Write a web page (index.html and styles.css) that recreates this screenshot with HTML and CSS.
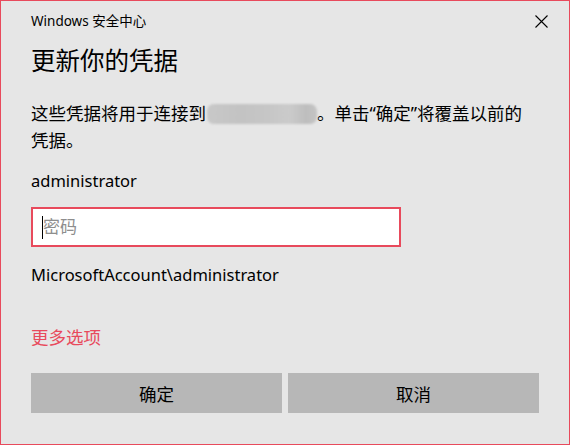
FILE: index.html
```html
<!DOCTYPE html>
<html lang="zh-CN">
<head>
<meta charset="utf-8">
<title>Windows 安全中心</title>
<link rel="stylesheet" href="styles.css">
</head>
<body>
<div class="dialog">
  <div class="titlebar">
    <span class="title">Windows 安全中心</span>
    <span class="close" aria-label="关闭">
      <svg width="13" height="13" viewBox="0 0 13 13"><path d="M0.5 0.5 L12.5 12.5 M12.5 0.5 L0.5 12.5" stroke="#000" stroke-width="1.1" fill="none"/></svg>
    </span>
  </div>
  <div class="content">
    <h1 class="heading">更新你的凭据</h1>
    <p class="desc">这些凭据将用于连接到<span class="redact"></span>。单击“确定”将覆盖以前的<br>凭据。</p>
    <div class="user">administrator</div>
    <div class="field"><span class="caret"></span><span class="placeholder">密码</span></div>
    <div class="domain">MicrosoftAccount\administrator</div>
    <a class="more">更多选项</a>
    <div class="buttons">
      <button class="btn">确定</button>
      <button class="btn">取消</button>
    </div>
  </div>
</div>
</body>
</html>
```
FILE: styles.css
```css
html, body {
  margin: 0;
  padding: 0;
  background: #e6e6e6;
}
.dialog {
  box-sizing: border-box;
  width: 570px;
  height: 445px;
  border: 1px solid #e84a5c;
  background: #e6e6e6;
  font-family: "Noto Sans", "Noto Sans CJK SC", sans-serif;
  color: #000;
}
.titlebar {
  display: flex;
  justify-content: space-between;
  align-items: flex-start;
  padding: 10px 21px 0 30px;
  height: 20px;
}
.title {
  font-size: 13.5px;
  line-height: 20px;
}
.close {
  display: block;
  margin-top: 4px;
  width: 13px;
  height: 13px;
}
.close svg { display: block; }
.content {
  padding: 0 30px;
  display: flex;
  flex-direction: column;
  align-items: flex-start;
}
.heading {
  margin: 14px 0 0 0;
  font-size: 24.5px;
  font-weight: normal;
  line-height: 32px;
}
.desc {
  margin: 23px 0 0 0;
  font-size: 17.5px;
  line-height: 27px;
}
.redact {
  display: inline-block;
  width: 110px;
  height: 20px;
  vertical-align: -4px;
  margin-left: 1px;
  border-radius: 7px;
  background: linear-gradient(90deg, #c8c8c8 0%, #c3c3c3 30%, #c6c6c6 55%, #cbcbcb 75%, #bebebe 90%, #c4c4c4 100%);
  filter: blur(0.8px);
}
.user {
  margin-top: 15px;
  font-size: 16.5px;
  line-height: 24px;
}
.field {
  box-sizing: border-box;
  margin-top: 14px;
  width: 370px;
  height: 40px;
  border: 2px solid #e84a5c;
  background: #fff;
  display: flex;
  align-items: center;
  padding-left: 9px;
}
.caret {
  width: 1px;
  height: 23px;
  background: #000;
}
.placeholder {
  font-size: 17px;
  color: #8e8e8e;
  line-height: 24px;
}
.domain {
  margin-top: 16px;
  font-size: 16.5px;
  line-height: 24px;
}
.more {
  margin-top: 38px;
  font-size: 17.5px;
  line-height: 24px;
  color: #e84a5c;
  cursor: pointer;
}
.buttons {
  margin-top: 24px;
  display: flex;
  gap: 6px;
}
.btn {
  width: 251px;
  height: 40px;
  border: none;
  background: #b7b7b7;
  font-family: "Noto Sans", "Noto Sans CJK SC", sans-serif;
  font-size: 17.5px;
  color: #000;
  padding: 0;
}
```
